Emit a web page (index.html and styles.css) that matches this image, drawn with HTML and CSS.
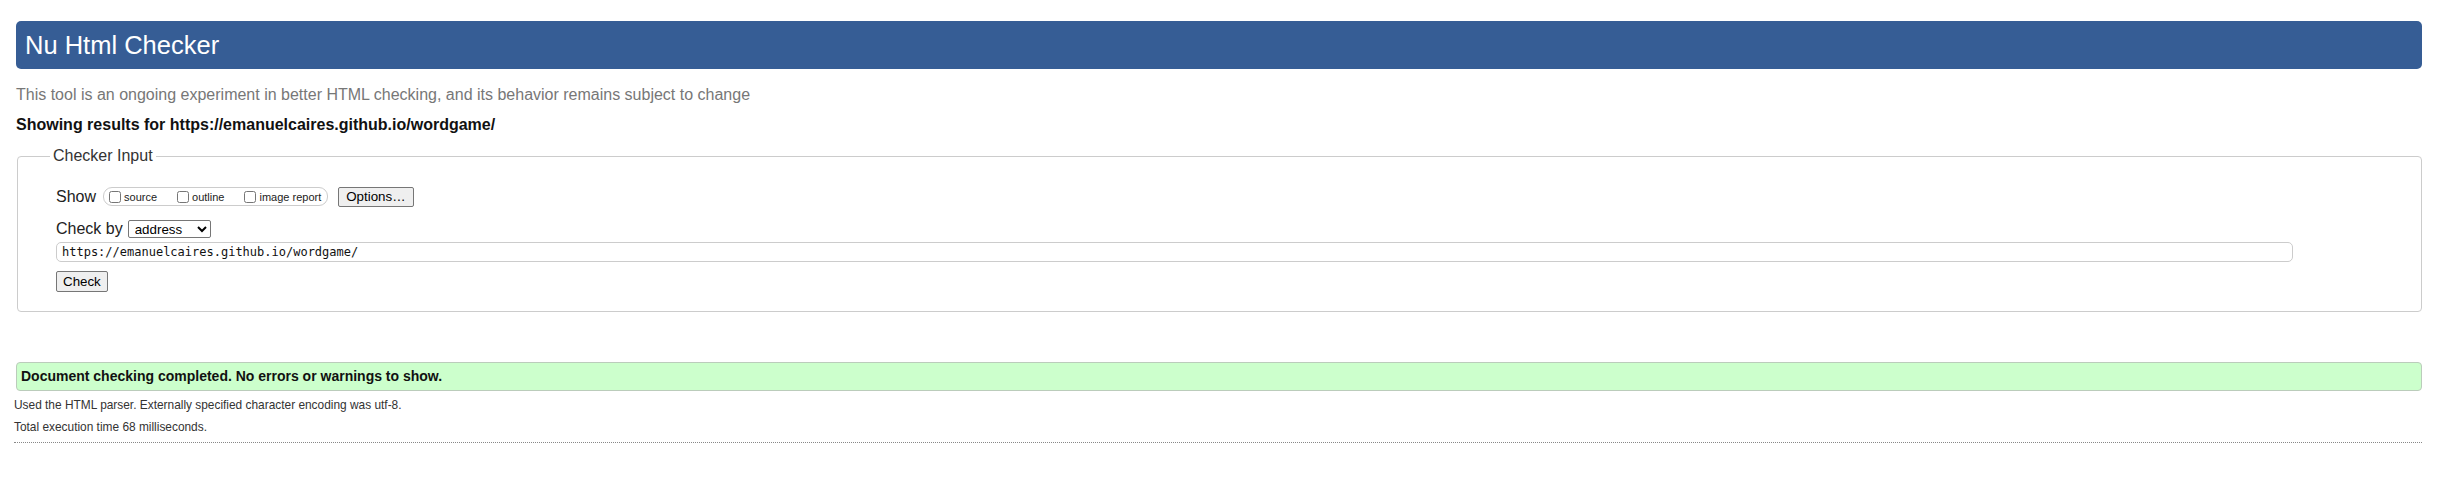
FILE: index.html
```html
<!DOCTYPE html>
<html lang="en">
<head>
<meta charset="utf-8">
<title>Nu Html Checker</title>
<link rel="stylesheet" href="styles.css">
</head>
<body>
<div class="page">
  <h1 class="title">Nu Html Checker</h1>
  <p class="intro">This tool is an ongoing experiment in better HTML checking, and its behavior remains subject to change</p>
  <p class="showing">Showing results for https://emanuelcaires.github.io/wordgame/</p>
  <fieldset class="checker">
    <legend class="legend">Checker Input</legend>
    <div class="row row-show">
      <span class="label">Show</span>
      <div class="pill">
        <label class="opt"><input type="checkbox" class="cb"><span>source</span></label>
        <label class="opt"><input type="checkbox" class="cb"><span>outline</span></label>
        <label class="opt"><input type="checkbox" class="cb"><span>image report</span></label>
      </div>
      <button type="button" class="btn btn-options">Options…</button>
    </div>
    <div class="row row-by">
      <span class="label">Check by</span>
      <select class="sel"><option>address</option></select>
    </div>
    <div class="row row-url">
      <input type="text" class="url" value="https://emanuelcaires.github.io/wordgame/">
    </div>
    <div class="row row-check">
      <button type="button" class="btn btn-check">Check</button>
    </div>
  </fieldset>
  <div class="success">Document checking completed. No errors or warnings to show.</div>
  <div class="details">
    <p class="detail">Used the HTML parser. Externally specified character encoding was utf-8.</p>
    <p class="detail detail-2">Total execution time 68 milliseconds.</p>
    <hr class="rule">
  </div>
</div>
</body>
</html>
```
FILE: styles.css
```css
html, body {
  margin: 0;
  background: #ffffff;
}
body {
  font-family: "Liberation Sans", Arial, sans-serif;
  color: #111;
}
.page {
  padding: 21px 33px 0 16px;
}
.title {
  margin: 0;
  height: 48px;
  line-height: 48px;
  font-size: 25.5px;
  font-weight: normal;
  color: #ffffff;
  background: #365d95;
  border-radius: 5px;
  padding-left: 9px;
}
.intro {
  margin: 17px 0 0;
  font-size: 16px;
  line-height: 18px;
  color: #777777;
}
.showing {
  margin: 12px 0 0;
  font-size: 16px;
  line-height: 18px;
  font-weight: bold;
  color: #111111;
}
.checker {
  margin: 13px 0 0 1px;
  padding: 21px 38px 19px 38px;
  border: 1px solid #cccccc;
  border-radius: 4px;
}
.legend {
  margin-left: -6px;
  padding: 0 3px;
  font-size: 16px;
  line-height: 18px;
  color: #333333;
}
.row {
  display: flex;
  align-items: center;
}
.label {
  font-size: 16px;
  line-height: 18px;
  color: #222222;
}
.row-show {
  height: 21px;
}
.pill {
  display: flex;
  align-items: center;
  height: 17px;
  margin-left: 7px;
  padding: 0 6px 0 5px;
  border: 1px solid #cccccc;
  border-radius: 9px;
  gap: 20px;
}
.opt {
  display: flex;
  align-items: center;
  font-size: 11px;
  color: #222222;
}
.cb {
  width: 12px;
  height: 12px;
  margin: 0 3px 0 0;
}
.btn {
  font-family: "Liberation Sans", Arial, sans-serif;
  font-size: 13.33px;
  color: #000;
  background: #efefef;
  border: 1px solid #767676;
  border-radius: 2px;
  padding: 0 6px;
}
.btn-options {
  height: 20px;
  margin-left: 10px;
  padding: 0 7px;
}
.row-by {
  margin-top: 12px;
  height: 19px;
}
.sel {
  margin-left: 5px;
  width: 83px;
  height: 18px;
  font-family: "Liberation Sans", Arial, sans-serif;
  font-size: 13.33px;
  border: 1px solid #767676;
  border-radius: 2px;
  background: #fff;
  color: #000;
  padding: 0 0 0 2px;
}
.row-url {
  margin-top: 4px;
}
.url {
  box-sizing: border-box;
  width: 2237px;
  height: 20px;
  margin: 0;
  padding: 0 5px;
  border: 1px solid #cccccc;
  border-radius: 5px;
  font-family: "DejaVu Sans Mono", monospace;
  font-size: 12px;
  color: #111;
}
.row-check {
  margin-top: 9px;
}
.btn-check {
  height: 21px;
}
.success {
  margin-top: 50px;
  padding: 6px 4px;
  line-height: 15px;
  font-size: 14px;
  font-weight: bold;
  color: #111;
  background: #ccffcc;
  border: 1px solid #bbccbb;
  border-radius: 4px;
}
.details {
  margin-left: -2px;
}
.detail {
  margin: 8px 0 0;
  font-size: 11.9px;
  line-height: 13px;
  color: #333333;
}
.detail-2 {
  margin-top: 9px;
}
.rule {
  margin: 8px 0 0;
  height: 0;
  border: 0;
  border-top: 1px dotted #888888;
}
```
